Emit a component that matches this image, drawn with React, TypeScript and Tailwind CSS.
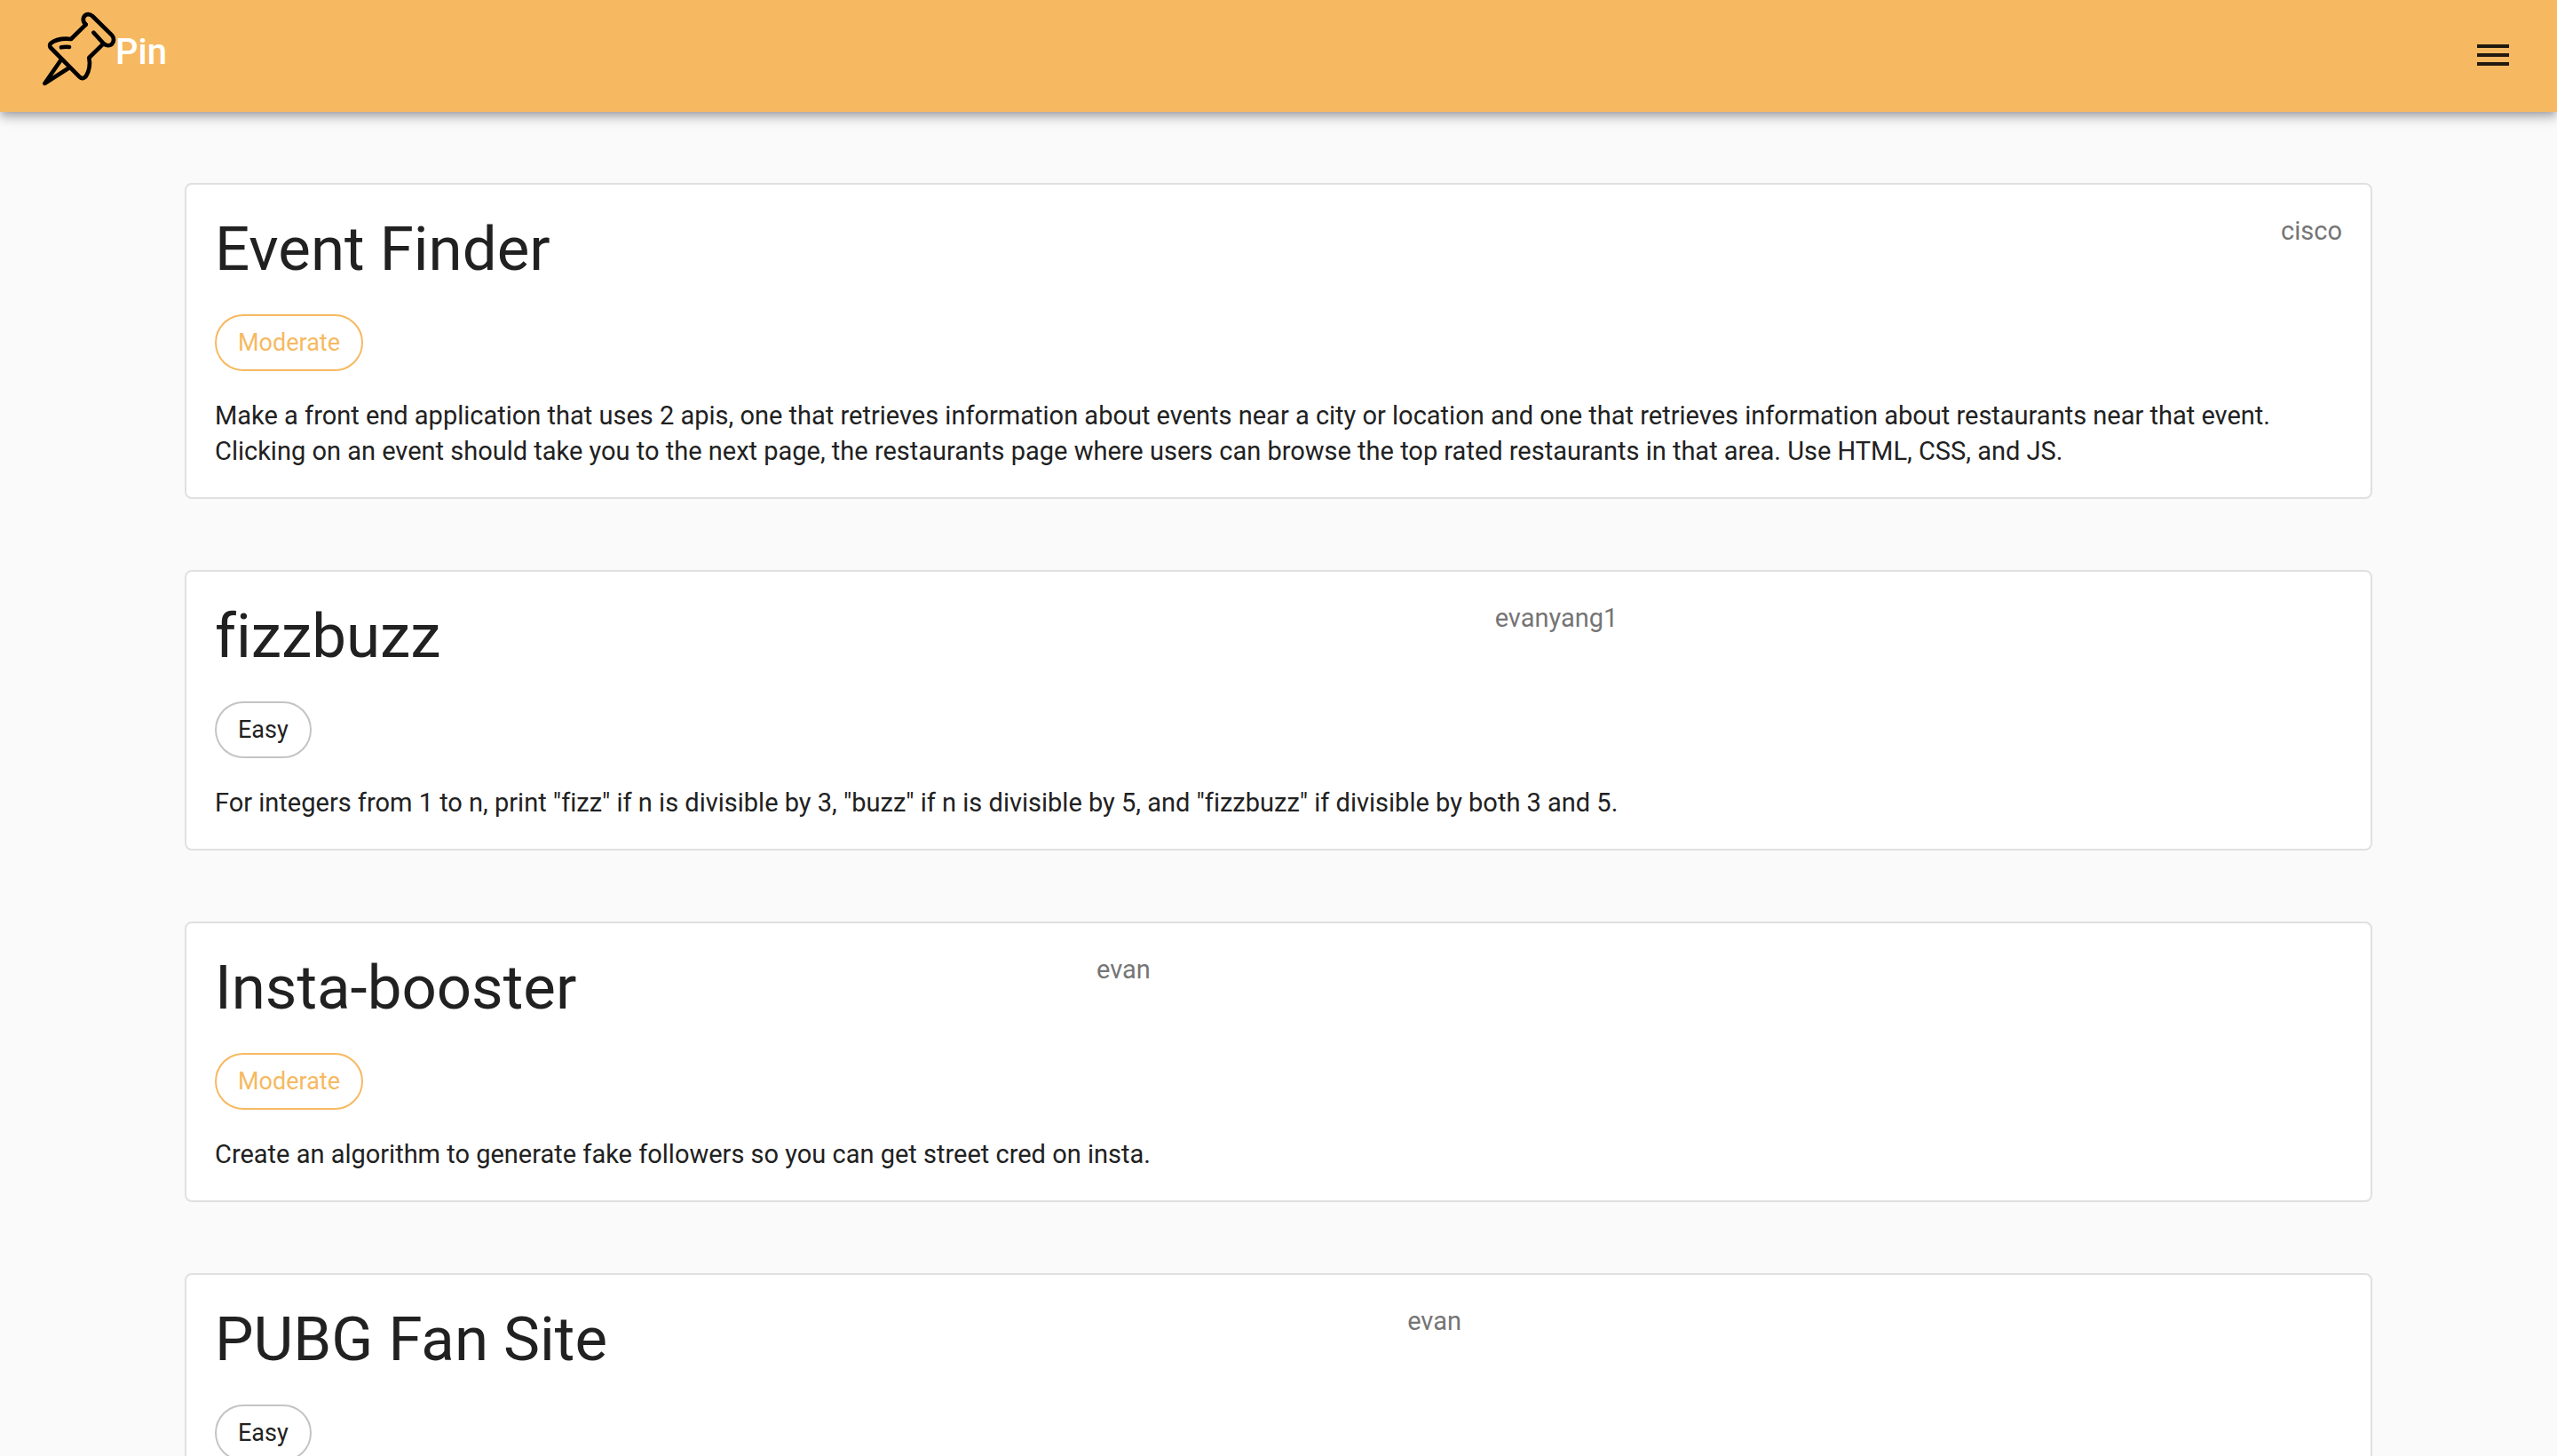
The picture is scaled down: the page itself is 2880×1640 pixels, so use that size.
type Level = "Easy" | "Moderate";

interface Challenge {
  title: string;
  author: string;
  level: Level;
  description?: string;
}

const challenges: Challenge[] = [
  {
    title: "Event Finder",
    author: "cisco",
    level: "Moderate",
    description:
      "Make a front end application that uses 2 apis, one that retrieves information about events near a city or location and one that retrieves information about restaurants near that event. Clicking on an event should take you to the next page, the restaurants page where users can browse the top rated restaurants in that area. Use HTML, CSS, and JS.",
  },
  {
    title: "fizzbuzz",
    author: "evanyang1",
    level: "Easy",
    description:
      'For integers from 1 to n, print "fizz" if n is divisible by 3, "buzz" if n is divisible by 5, and "fizzbuzz" if divisible by both 3 and 5.',
  },
  {
    title: "Insta-booster",
    author: "evan",
    level: "Moderate",
    description:
      "Create an algorithm to generate fake followers so you can get street cred on insta.",
  },
  {
    title: "PUBG Fan Site",
    author: "evan",
    level: "Easy",
  },
];

const chipStyles: Record<Level, string> = {
  Easy: "border-[#c4c4c4] text-[#212121]",
  Moderate: "border-[#f6b961] text-[#f6b961]",
};

function PushPin() {
  return (
    <svg
      className="size-[82px] overflow-visible"
      viewBox="144 42 246 246"
      fill="none"
      stroke="#000"
      strokeWidth="14"
      strokeLinecap="round"
      strokeLinejoin="round"
      aria-hidden="true"
    >
      {/* cap */}
      <path d="M290 83C278 73 279 57 290 50C297 47 305 48 312 54L378 119C386 127 386 141 378 149C370 156 359 155 350 147L316 110" />
      {/* body */}
      <path d="M290 83L240 132C214 129 188 134 172 146C167 150 167 157 172 162L268 259C276 267 285 266 291 257C301 240 305 217 301 195L349 148" />
      {/* needle */}
      <path d="M207 201L151 282L234 229" />
      <path d="M207 160Q220 157 234 159" />
    </svg>
  );
}

function Header() {
  return (
    <header className="relative flex h-[126px] items-start justify-between bg-[#f6b961] px-12 shadow-[0_4px_8px_-2px_rgba(0,0,0,0.2),0_8px_10px_0_rgba(0,0,0,0.14),0_2px_20px_0_rgba(0,0,0,0.12)]">
      <a href="#" className="flex items-center pt-3.5 text-white">
        <PushPin />
        <span className="pt-2 text-[40px] leading-[60px] font-medium">Pin</span>
      </a>
      <button type="button" aria-label="Open menu" className="pt-[38px] text-[#211910]">
        <svg className="size-12" viewBox="0 0 24 24" fill="currentColor" aria-hidden="true">
          <path d="M3 18h18v-2H3v2zm0-5h18v-2H3v2zm0-7v2h18V6H3z" />
        </svg>
      </button>
    </header>
  );
}

function ChallengeCard({ title, author, level, description }: Challenge) {
  return (
    <article className="flex rounded-lg border-2 border-[#e0e0e0] bg-white p-8">
      <div
        className={`flex flex-col items-start gap-[30px] ${description ? "" : "w-full max-w-[1404px]"}`}
      >
        <div className="flex w-full items-start justify-between">
          <h2 className="pb-0.5 text-[69px] leading-[82px]">{title}</h2>
          <span className="text-[29px] leading-10 text-[#757575]">{author}</span>
        </div>
        <span
          className={`flex h-16 items-center rounded-full border-2 px-6 text-[27px] leading-8 ${chipStyles[level]}`}
        >
          {level}
        </span>
        {description && <p className="text-[29px] leading-10">{description}</p>}
      </div>
    </article>
  );
}

export default function App() {
  return (
    <div className="h-screen overflow-hidden bg-[#fafafa] font-[Roboto,sans-serif] text-[#212121] [font-variant-ligatures:none]">
      <Header />
      <main className="flex flex-col gap-20 px-52 py-20">
        {challenges.map((challenge) => (
          <ChallengeCard key={challenge.title} {...challenge} />
        ))}
      </main>
    </div>
  );
}
